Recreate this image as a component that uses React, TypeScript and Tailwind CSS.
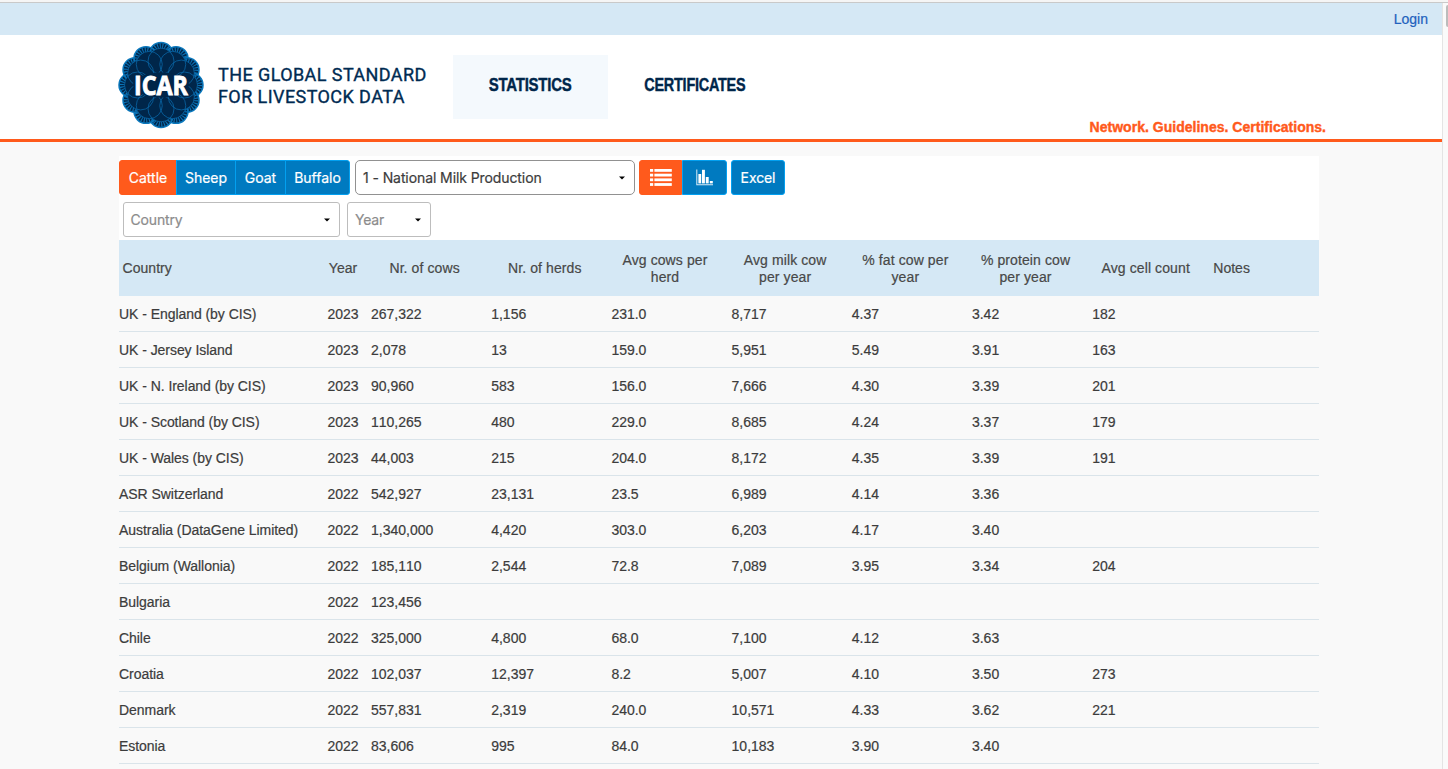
const rows: string[][] = [
  ['UK - England (by CIS)', '2023', '267,322', '1,156', '231.0', '8,717', '4.37', '3.42', '182'],
  ['UK - Jersey Island', '2023', '2,078', '13', '159.0', '5,951', '5.49', '3.91', '163'],
  ['UK - N. Ireland (by CIS)', '2023', '90,960', '583', '156.0', '7,666', '4.30', '3.39', '201'],
  ['UK - Scotland (by CIS)', '2023', '110,265', '480', '229.0', '8,685', '4.24', '3.37', '179'],
  ['UK - Wales (by CIS)', '2023', '44,003', '215', '204.0', '8,172', '4.35', '3.39', '191'],
  ['ASR Switzerland', '2022', '542,927', '23,131', '23.5', '6,989', '4.14', '3.36', ''],
  ['Australia (DataGene Limited)', '2022', '1,340,000', '4,420', '303.0', '6,203', '4.17', '3.40', ''],
  ['Belgium (Wallonia)', '2022', '185,110', '2,544', '72.8', '7,089', '3.95', '3.34', '204'],
  ['Bulgaria', '2022', '123,456', '', '', '', '', '', ''],
  ['Chile', '2022', '325,000', '4,800', '68.0', '7,100', '4.12', '3.63', ''],
  ['Croatia', '2022', '102,037', '12,397', '8.2', '5,007', '4.10', '3.50', '273'],
  ['Denmark', '2022', '557,831', '2,319', '240.0', '10,571', '4.33', '3.62', '221'],
  ['Estonia', '2022', '83,606', '995', '84.0', '10,183', '3.90', '3.40', ''],
];

const headers = [
  'Nr. of cows',
  'Nr. of herds',
  'Avg cows per herd',
  'Avg milk cow per year',
  '% fat cow per year',
  '% protein cow per year',
  'Avg cell count',
];

const gridCols = 'grid grid-cols-[200px_48px_repeat(7,120.2px)_1fr]';

const ring = (distance: number) =>
  Array.from({ length: 12 }, (_, i) => {
    const a = (i * Math.PI) / 6;
    return { x: 43 + distance * Math.sin(a), y: 44 - distance * 1.015 * Math.cos(a) };
  });

const lobes = ring(30);
const petals = ring(23.5);

function Logo() {
  return (
    <svg width="86" height="88" viewBox="0 0 86 88" className="block">
      {lobes.map((l, i) => (
        <circle key={i} cx={l.x} cy={l.y} r="12" fill="#00264a" stroke="#0a78bd" strokeWidth="1.5" />
      ))}
      {lobes.map((l, i) => (
        <circle key={i} cx={l.x} cy={l.y} r="8.8" fill="none" stroke="#0a72b5" strokeWidth="5.2" strokeDasharray="1 1.5" />
      ))}
      {petals.map((l, i) => (
        <circle key={i} cx={l.x} cy={l.y} r="13" fill="#00264a" />
      ))}
      {petals.map((l, i) => (
        <circle key={i} cx={l.x} cy={l.y} r="13" fill="none" stroke="#0966a6" strokeWidth="0.8" />
      ))}
      <ellipse cx="43" cy="44" rx="28" ry="12.5" fill="#00264a" />
      <text x="43" y="53.5" textAnchor="middle" textLength="54" lengthAdjust="spacingAndGlyphs" fill="#fff" stroke="#fff" strokeWidth="0.9" fontSize="26" fontWeight="700" fontFamily="Open Sans, sans-serif">
        ICAR
      </text>
    </svg>
  );
}

function Caret() {
  return (
    <svg width="6" height="4" viewBox="0 0 6 4" className="block">
      <path d="M0 0.4h6L3 3.4z" fill="#000" />
    </svg>
  );
}

function ListIcon() {
  return (
    <svg width="22" height="18" viewBox="0 0 22 18" fill="#fff">
      {[0, 4.7, 9.4, 14.1].map((y) => (
        <g key={y}>
          <rect x="0" y={y} width="3.2" height="2.8" />
          <rect x="4.4" y={y} width="17.4" height="2.8" />
        </g>
      ))}
    </svg>
  );
}

function ChartIcon() {
  return (
    <svg width="18" height="17" viewBox="0 0 18 17" fill="#fff">
      <path d="M0.3 0.5h1v14.8H17v1H0.3z" opacity="0.85" />
      <rect x="2.4" y="5" width="2.8" height="9.4" />
      <rect x="6" y="0.8" width="2.9" height="13.6" />
      <rect x="9.8" y="8" width="2.9" height="6.4" />
      <rect x="13.8" y="12" width="3" height="2.4" />
    </svg>
  );
}

const btn = 'flex h-[35px] items-center justify-center border border-[#03a0f0] bg-[#007ac0] text-white';

export default function App() {
  return (
    <div className="flex h-[769px] w-[1448px] flex-col overflow-hidden bg-[#f9f9f9] font-['Liberation_Sans',Arial,sans-serif] text-sm text-[#3c3c3c] [-webkit-text-stroke:0.2px]">
      <div className="h-[3px] shrink-0 border-b border-[#c9c9c9] bg-[#f5f5f5]" />
      <div className="flex min-h-0 flex-1">
        <div className="flex min-w-0 flex-1 flex-col overflow-hidden">
          <div className="flex h-8 shrink-0 items-center justify-end bg-[#d5e8f5] pr-[14px] text-[#2161bd]">
            <a>Login</a>
          </div>
          <header className="flex h-[107px] shrink-0 border-b-[3px] border-[#ff5a1c] bg-white pl-[118px] pr-[116px]">
            <div className="mt-[6px]">
              <Logo />
            </div>
            <div className="ml-[14px] mt-[29px] w-[221px] whitespace-nowrap font-[Roboto,sans-serif] text-[18px] leading-[22px] tracking-[0.42px] text-[#002b52] [-webkit-text-stroke:0.35px]">
              <div>THE GLOBAL STANDARD</div>
              <div>FOR LIVESTOCK DATA</div>
            </div>
            <nav className="ml-[14px] mt-5 flex h-16 whitespace-nowrap text-[18.5px] font-bold text-[#00264a] [-webkit-text-stroke:0.4px]">
              <a className="flex w-[155px] items-center justify-center bg-[#f4f9fd] pb-[3px] tracking-[-0.3px]">
                <span className="scale-x-[0.81]">STATISTICS</span>
              </a>
              <a className="flex w-[173px] items-center justify-center pb-[3px] tracking-[-0.3px]">
                <span className="scale-x-[0.78]">CERTIFICATES</span>
              </a>
            </nav>
            <div className="ml-auto self-end pb-[2px] text-[14px] font-bold tracking-[0.02px] text-[#ff5a1c] [-webkit-text-stroke:0.4px]">
              Network. Guidelines. Certifications.
            </div>
          </header>
          <main className="ml-[119px] mt-[14px] w-[1200px]">
            <div className="h-[84px] bg-white pt-1 font-[Inter,sans-serif] text-[14px]">
              <div className="flex">
                <button className={`${btn} w-[58px] rounded-l-[3px] border-[#ff5a1c]! bg-[#ff5a1c]!`}>Cattle</button>
                <button className={`${btn} -ml-px w-[60px]`}>Sheep</button>
                <button className={`${btn} -ml-px w-[51px]`}>Goat</button>
                <button className={`${btn} -ml-px w-[65px] rounded-r-[3px]`}>Buffalo</button>
                <div className="ml-[5px] flex h-[35px] w-[280px] items-center justify-between rounded-[5px] border border-[#919191] pl-[7px] pr-[9px]">
                  <span className="tracking-[-0.09px]">1 - National Milk Production</span>
                  <Caret />
                </div>
                <button className={`${btn} ml-1 w-[43px] rounded-l-[3px] border-[#ff5a1c]! bg-[#ff5a1c]!`}>
                  <ListIcon />
                </button>
                <button className={`${btn} w-[45px] rounded-r-[3px]`}>
                  <ChartIcon />
                </button>
                <button className={`${btn} ml-1 w-[54px] rounded-[3px] tracking-[-0.1px]`}>Excel</button>
              </div>
              <div className="ml-1 mt-[7px] flex gap-[7px] text-[#8c8c8c]">
                <div className="flex h-[35px] w-[217px] items-center justify-between rounded-[3px] border border-[#bdbdbd] pl-[6.5px] pr-[9px]">
                  <span className="tracking-[-0.15px]">Country</span>
                  <Caret />
                </div>
                <div className="flex h-[35px] w-[84px] items-center justify-between rounded-[3px] border border-[#bdbdbd] pl-[7px] pr-[9px]">
                  <span className="tracking-[-0.2px]">Year</span>
                  <Caret />
                </div>
              </div>
            </div>
            <div className={`${gridCols} h-14 items-center bg-[#d5e8f5] pt-px text-center leading-[17px] text-[#484848]`}>
              <div className="pb-px pl-[3.5px] text-left tracking-[0.05px]">Country</div>
              <div className="pb-px">Year</div>
              {headers.map((h) => (
                <div key={h} className="pl-[9px] pr-[14px] tracking-[0.1px]">{h}</div>
              ))}
              <div className="pb-px pl-[5px] text-left">Notes</div>
            </div>
            {rows.map((r) => (
              <div key={r[0]} className={`${gridCols} h-9 items-center whitespace-nowrap border-b border-[#dae4ea]`}>
                {r.map((c, i) => (
                  <div key={i} className={i === 0 ? 'tracking-[-0.05px]' : i === 1 ? 'text-center' : 'pl-1 [font-kerning:none]'}>{c}</div>
                ))}
              </div>
            ))}
          </main>
        </div>
        <div className="flex w-[6px] shrink-0 justify-end overflow-hidden border-l border-[#e4e4e4] bg-[#fafafa] pt-[2px]">
          <div className="h-[22px] w-[2px] rounded-l-full bg-[#bcbcbc]" />
        </div>
      </div>
    </div>
  );
}
